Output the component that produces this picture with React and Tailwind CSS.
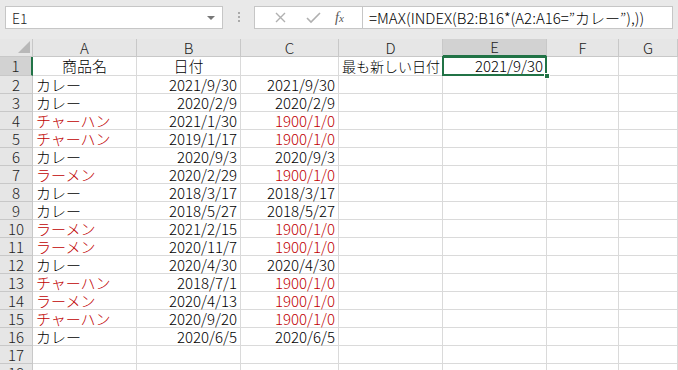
import React from "react";

const RED = "text-[#c00000]";

const data = [
  ["カレー", "2021/9/30", "2021/9/30", false],
  ["カレー", "2020/2/9", "2020/2/9", false],
  ["チャーハン", "2021/1/30", "1900/1/0", true],
  ["チャーハン", "2019/1/17", "1900/1/0", true],
  ["カレー", "2020/9/3", "2020/9/3", false],
  ["ラーメン", "2020/2/29", "1900/1/0", true],
  ["カレー", "2018/3/17", "2018/3/17", false],
  ["カレー", "2018/5/27", "2018/5/27", false],
  ["ラーメン", "2021/2/15", "1900/1/0", true],
  ["ラーメン", "2020/11/7", "1900/1/0", true],
  ["カレー", "2020/4/30", "2020/4/30", false],
  ["チャーハン", "2018/7/1", "1900/1/0", true],
  ["ラーメン", "2020/4/13", "1900/1/0", true],
  ["チャーハン", "2020/9/20", "1900/1/0", true],
  ["カレー", "2020/6/5", "2020/6/5", false],
];

const cols = ["A", "B", "C", "D", "E", "F", "G"];
const gridCols = "grid grid-cols-[33px_104px_104px_98px_104px_104px_72px_1fr]";

function RowHead({ n, active }) {
  return (
    <div
      className={
        active
          ? "flex items-center justify-center bg-[#d2d2d2] border-b border-[#c8c8c8] border-r-2 border-r-[#217346] text-[#222]"
          : "flex items-center justify-center bg-[#e6e6e6] border-b border-r border-[#c8c8c8] text-[#222]"
      }
    >
      {n}
    </div>
  );
}

function Cell({ children, align = "left", red }) {
  const a = align === "right" ? "justify-end pr-[3px]" : align === "center" ? "justify-center" : "justify-start pl-[3px]";
  return (
    <div className={`flex items-center whitespace-nowrap border-b border-r border-[#dadada] ${a} ${red ? RED : "text-black"}`}>
      {children}
    </div>
  );
}

export default function App() {
  return (
    <div
      className="w-[678px] h-[370px] overflow-hidden bg-white text-[15px] leading-[16px] font-light"
      style={{ fontFamily: '"Noto Sans CJK JP", "Liberation Sans", sans-serif' }}
    >
      {/* formula bar */}
      <div className="h-[39px] bg-[#e9e9e9] flex items-start pt-[6px] pl-[5px]">
        <div className="w-[218px] h-[23px] bg-white border border-[#c6c6c6] flex items-center pl-[6px] pr-[7px] text-[14px] text-[#222]">
          <span className="flex-1">E1</span>
          <span className="w-0 h-0 border-l-[4px] border-r-[4px] border-t-[4px] border-l-transparent border-r-transparent border-t-[#777]" />
        </div>
        <div className="w-[31px] flex flex-col items-center gap-[2px] pt-[6px]">
          <span className="w-[2px] h-[2px] bg-[#aaa]" />
          <span className="w-[2px] h-[2px] bg-[#aaa]" />
          <span className="w-[2px] h-[2px] bg-[#aaa]" />
        </div>
        <div className="h-[23px] w-[109px] bg-white border border-[#c6c6c6] flex items-center">
          <svg width="36" height="23" viewBox="0 0 36 23" className="ml-[8px]">
            <path d="M13 7 L22 16 M22 7 L13 16" stroke="#b0b0b0" strokeWidth="1.4" />
          </svg>
          <svg width="30" height="23" viewBox="0 0 30 23">
            <path d="M8 12 L12 16 L21 7" stroke="#b0b0b0" strokeWidth="1.6" fill="none" />
          </svg>
          <span className="ml-[6px] italic text-[14px] text-[#555]" style={{ fontFamily: '"Liberation Serif", serif' }}>
            f<span className="text-[11px]">x</span>
          </span>
        </div>
        <div className="h-[23px] w-[310px] bg-white border border-l-0 border-[#c6c6c6] flex items-center pl-[6px] text-[15px] text-black whitespace-nowrap">
          =MAX(INDEX(B2:B16*(A2:A16=”カレー”),))
        </div>
      </div>

      {/* grid */}
      <div className={`${gridCols} grid-rows-[18px_19px] auto-rows-[18px]`}>
        {/* header row */}
        <div className="relative bg-[#e6e6e6] border-b border-r border-[#c8c8c8]">
          <svg width="12" height="12" className="absolute right-[2px] bottom-[3px]">
            <path d="M12 0 L12 12 L0 12 Z" fill="#b8b8b8" />
          </svg>
        </div>
        {cols.map((c) =>
          c === "E" ? (
            <div key={c} className="flex items-center justify-center bg-[#d2d2d2] border-r border-[#c8c8c8] border-b-2 border-b-[#217346] text-[#222]">
              {c}
            </div>
          ) : (
            <div key={c} className="flex items-center justify-center bg-[#e6e6e6] border-b border-r border-[#c8c8c8] text-[#222]">
              {c}
            </div>
          )
        )}

        {/* row 1 */}
        <RowHead n={1} active />
        <Cell align="center">商品名</Cell>
        <Cell align="center">日付</Cell>
        <Cell />
        <Cell>
          <span className="text-[14px]">最も新しい日付</span>
        </Cell>
        <div className="relative flex items-center justify-end pr-[3px] border-b border-r border-[#dadada]">
          2021/9/30
          <span className="absolute -left-px -top-px -right-px -bottom-px border-2 border-[#217346]" />
          <span className="absolute -right-[4px] -bottom-[4px] w-[6px] h-[6px] bg-[#217346] border border-white" />
        </div>
        <Cell />
        <Cell />

        {data.map(([name, d1, d2, red], i) => (
          <React.Fragment key={i}>
            <RowHead n={i + 2} />
            <Cell red={red}>{name}</Cell>
            <Cell align="right">{d1}</Cell>
            <Cell align="right" red={red}>{d2}</Cell>
            <Cell />
            <Cell />
            <Cell />
            <Cell />
          </React.Fragment>
        ))}

        {[17, 18].map((n) => (
          <React.Fragment key={n}>
            <RowHead n={n} />
            <Cell />
            <Cell />
            <Cell />
            <Cell />
            <Cell />
            <Cell />
            <Cell />
          </React.Fragment>
        ))}
      </div>
    </div>
  );
}
